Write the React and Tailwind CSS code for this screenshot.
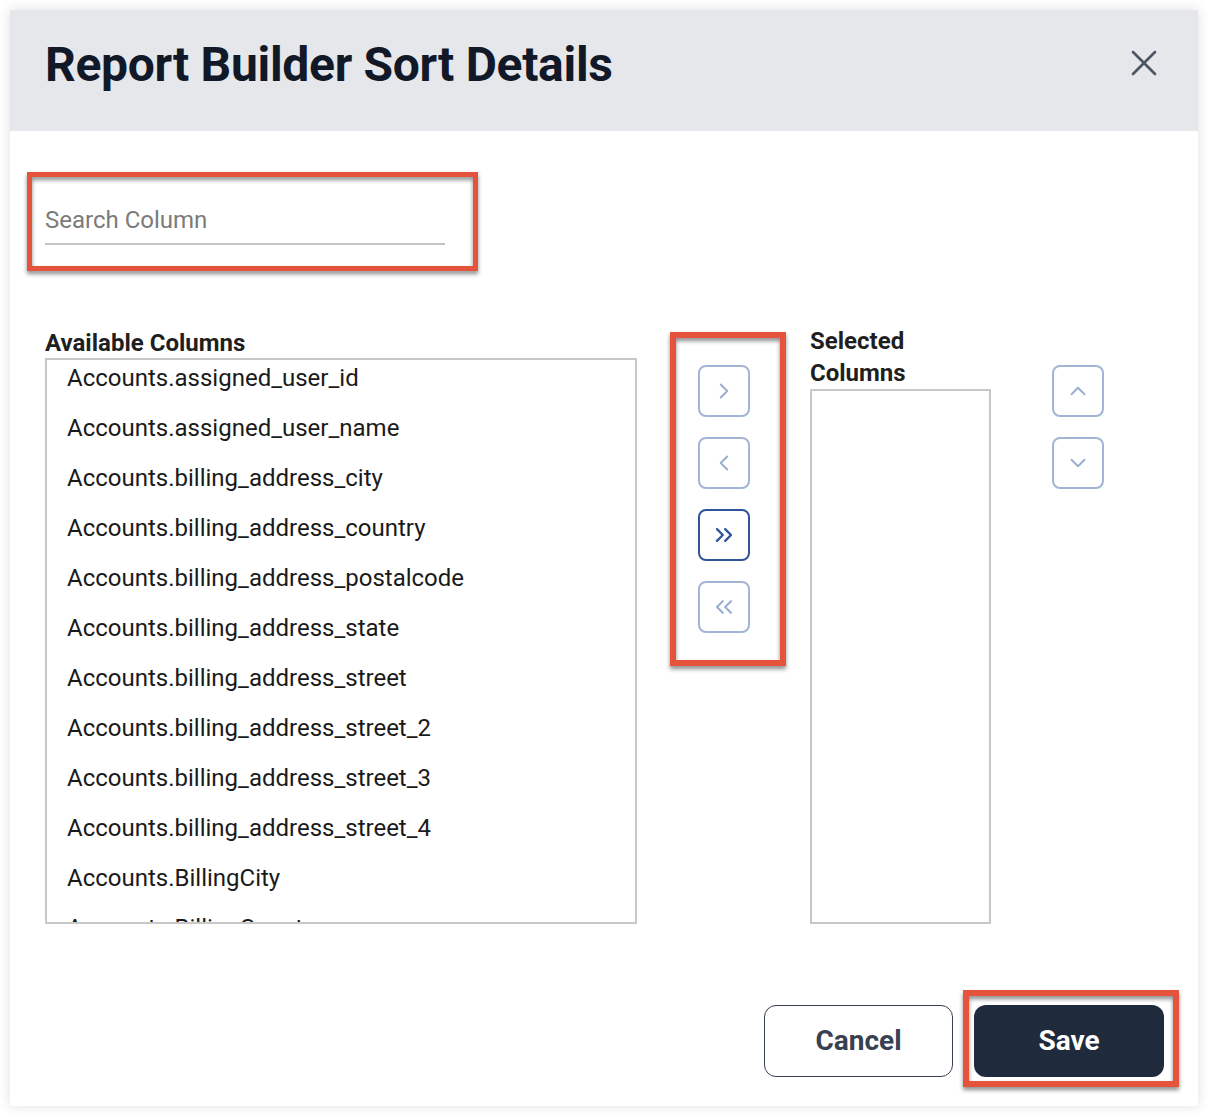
import React from "react";
import { ChevronRight, ChevronLeft, ChevronsRight, ChevronsLeft, ChevronUp, ChevronDown, X } from "lucide-react";

const items = [
  "Accounts.assigned_user_id",
  "Accounts.assigned_user_name",
  "Accounts.billing_address_city",
  "Accounts.billing_address_country",
  "Accounts.billing_address_postalcode",
  "Accounts.billing_address_state",
  "Accounts.billing_address_street",
  "Accounts.billing_address_street_2",
  "Accounts.billing_address_street_3",
  "Accounts.billing_address_street_4",
  "Accounts.BillingCity",
  "Accounts.BillingCountry",
];

function IconBtn({ children, active }) {
  return (
    <button
      className={
        "w-[52px] h-[52px] rounded-[8px] border-2 flex items-center justify-center bg-white " +
        (active ? "border-[#2f5597] text-[#2f5597]" : "border-[#a3b5d6] text-[#9aaed0]")
      }
    >
      {children}
    </button>
  );
}

export default function App() {
  return (
    <div className="bg-white w-[1208px] h-[1116px] p-[10px]" style={{ fontFamily: "Roboto, 'Liberation Sans', sans-serif" }}>
      <div className="w-[1188px] h-[1096px] bg-white shadow-[0_0_12px_rgba(0,0,0,0.13)] flex flex-col">
        {/* header */}
        <div className="h-[121px] bg-[#e5e7eb] flex items-center justify-between pl-[35px] pr-[32px] shrink-0">
          <h1 className="text-[48px] font-bold text-[#111827] leading-none tracking-[-0.3px] -mt-[12px]">Report Builder Sort Details</h1>
          <X size={44} strokeWidth={1.4} className="text-[#4b5563] -mt-[15px]" />
        </div>

        {/* body */}
        <div className="flex-1 flex flex-col pl-[35px] pr-[34px]">
          {/* search */}
          <div className="relative w-[400px] mt-[68px] h-[46px] border-b-2 border-[#c4c4c4] flex items-center">
            <span className="text-[24px] text-[#7b7b7b] -mt-[3px]">Search Column</span>
            <div className="absolute -left-[18px] -right-[33px] -top-[27px] -bottom-[28px] border-[5px] border-[#e5533d] drop-shadow-[0_3px_2px_rgba(0,0,0,0.45)]" />
          </div>

          {/* columns */}
          <div className="flex items-start mt-[83px]">
            {/* available */}
            <div className="flex flex-col">
              <div className="text-[24px] font-bold text-[#1f1f1f] leading-[30px] h-[30px]">Available Columns</div>
              <div className="w-[592px] h-[566px] border-2 border-[#c8c8c8] overflow-hidden">
                <div className="-mt-[7px]">
                  {items.map((t) => (
                    <div key={t} className="h-[50px] flex items-center pl-[20px] text-[24px] text-[#1a1a1a]">
                      {t}
                    </div>
                  ))}
                </div>
              </div>
            </div>

            {/* move buttons */}
            <div className="relative ml-[61px] mt-[37px] flex flex-col gap-[20px]">
              <IconBtn><ChevronRight size={26} strokeWidth={1.8} /></IconBtn>
              <IconBtn><ChevronLeft size={26} strokeWidth={1.8} /></IconBtn>
              <IconBtn active><ChevronsRight size={28} strokeWidth={2} /></IconBtn>
              <IconBtn><ChevronsLeft size={28} strokeWidth={1.8} /></IconBtn>
              <div className="absolute -left-[28px] -right-[36px] -top-[33px] -bottom-[33px] border-[6px] border-[#e5533d] drop-shadow-[0_3px_2px_rgba(0,0,0,0.45)]" />
            </div>

            {/* selected */}
            <div className="flex flex-col ml-[60px] -mt-[3px]">
              <div className="text-[24px] font-bold text-[#1f1f1f] leading-[32px] h-[64px]">
                Selected<br />Columns
              </div>
              <div className="w-[181px] h-[535px] border-2 border-[#c8c8c8]" />
            </div>

            {/* order buttons */}
            <div className="ml-[61px] mt-[37px] flex flex-col gap-[20px]">
              <IconBtn><ChevronUp size={26} strokeWidth={1.8} /></IconBtn>
              <IconBtn><ChevronDown size={26} strokeWidth={1.8} /></IconBtn>
            </div>
          </div>

          {/* footer */}
          <div className="flex justify-end gap-[21px] mt-[81px]">
            <button className="w-[189px] h-[72px] rounded-[12px] border border-[#374151] bg-white text-[28px] font-bold text-[#374151]">
              Cancel
            </button>
            <div className="relative">
              <button className="w-[190px] h-[72px] rounded-[12px] bg-[#1f2a3c] text-[28px] font-bold text-white">
                Save
              </button>
              <div className="absolute -left-[11px] -right-[15px] -top-[15px] -bottom-[10px] border-[6px] border-[#e5533d] drop-shadow-[0_3px_2px_rgba(0,0,0,0.45)]" />
            </div>
          </div>
        </div>
      </div>
    </div>
  );
}
